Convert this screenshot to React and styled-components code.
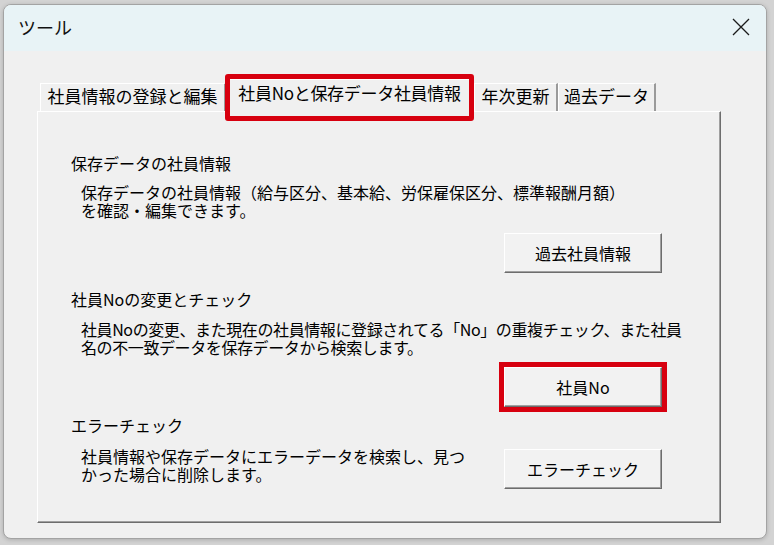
import React from "react";
import styled, { createGlobalStyle } from "styled-components";

const GlobalStyle = createGlobalStyle`
  html, body {
    margin: 0;
    padding: 0;
    background: #d3d3d3;
  }
  body {
    width: 774px;
    height: 545px;
    overflow: hidden;
    font-family: "Noto Sans CJK JP", "Noto Sans", sans-serif;
    color: #000;
  }
`;

const tabs = [
  { label: "社員情報の登録と編集", width: 186 },
  { label: "社員Noと保存データ社員情報", width: 244, active: true },
  { label: "年次更新", width: 84 },
  { label: "過去データ", width: 98 },
];

const App = () => {
  return (
    <>
      <GlobalStyle />
      <Page>
        <Window>
          <TitleBar>
            <Title>ツール</Title>
            <CloseButton>
              <svg width="20" height="20" viewBox="0 0 20 20">
                <path
                  d="M2 2 L18 18 M18 2 L2 18"
                  stroke="#1a1a1a"
                  strokeWidth="1.3"
                  fill="none"
                />
              </svg>
            </CloseButton>
          </TitleBar>
          <Body>
            <TabRow>
              {tabs.map((t) => (
                <Tab key={t.label} width={t.width} active={t.active}>
                  {t.label}
                </Tab>
              ))}
            </TabRow>
            <Panel>
              <Heading>保存データの社員情報</Heading>
              <Desc>
                <Line>保存データの社員情報（給与区分、基本給、労保雇保区分、標準報酬月額）</Line>
                <Line>を確認・編集できます。</Line>
              </Desc>
              <ButtonRow gap={14}>
                <Button>過去社員情報</Button>
              </ButtonRow>

              <Heading top={16}>社員Noの変更とチェック</Heading>
              <Desc top={11} tight>
                <Line>社員Noの変更、また現在の社員情報に登録されてる「No」の重複チェック、また社員</Line>
                <Line>名の不一致データを保存データから検索します。</Line>
              </Desc>
              <ButtonRow gap={11}>
                <Button marked>社員No</Button>
              </ButtonRow>

              <Heading top={8}>エラーチェック</Heading>
              <SplitRow>
                <Desc top={0}>
                  <Line>社員情報や保存データにエラーデータを検索し、見つ</Line>
                  <Line>かった場合に削除します。</Line>
                </Desc>
                <Button>エラーチェック</Button>
              </SplitRow>
            </Panel>
          </Body>
        </Window>
      </Page>
    </>
  );
};
export default App;

const Page = styled.div`
  padding: 4px 0 0 3px;
`;

const Window = styled.div`
  width: 764px;
  height: 535px;
  box-sizing: border-box;
  border: 1px solid #a3a3a3;
  border-radius: 8px;
  overflow: hidden;
  background: #f0f0f0;
  box-shadow: 0 1px 4px rgba(0, 0, 0, 0.18);
  display: flex;
  flex-direction: column;
`;

const TitleBar = styled.div`
  height: 46px;
  flex-shrink: 0;
  background: #e8f3f6;
  display: flex;
  align-items: center;
  justify-content: space-between;
  padding: 0 15px 0 14px;
`;

const Title = styled.div`
  font-size: 18px;
  line-height: 22px;
  color: #111;
  margin-top: -2px;
`;

const CloseButton = styled.div`
  width: 20px;
  height: 20px;
  display: flex;
  align-items: center;
  justify-content: center;
  margin-top: -2px;
`;

const Body = styled.div`
  padding: 28px 0 0 33px;
`;

const TabRow = styled.div`
  display: flex;
  align-items: flex-end;
  height: 34px;
  padding-left: 3px;
  position: relative;
  z-index: 1;
  margin-bottom: -2px;
`;

const Tab = styled.div`
  position: relative;
  box-sizing: border-box;
  width: ${({ width }) => width}px;
  height: ${({ active }) => (active ? 34 : 28)}px;
  margin: ${({ active }) => (active ? "0 2px" : "0 0 2px 0")};
  padding-top: ${({ active }) => (active ? 1 : 0)}px;
  text-align: center;
  font-size: 17px;
  line-height: 24px;
  white-space: nowrap;
  letter-spacing: ${({ active }) => (active ? "-0.3px" : "0")};
  background: #f0f0f0;
  border-left: 1px solid #ffffff;
  border-top: 1px solid #ffffff;
  border-right: 2px solid ${({ active }) => (active ? "#a0a0a0" : "#9a9a9a")};

  ${({ active }) =>
    active &&
    `
    &::after {
      content: "";
      position: absolute;
      left: -4px;
      right: -4px;
      top: -6px;
      bottom: -8px;
      border: 5px solid #d7000f;
      border-radius: 3px;
    }
  `}
`;

const Panel = styled.div`
  width: 684px;
  height: 412px;
  box-sizing: border-box;
  padding: 41px 58px 0 33px;
  border-left: 1px solid #ffffff;
  border-top: 1px solid #ffffff;
  border-right: 1px solid #6d6d6d;
  border-bottom: 1px solid #6d6d6d;
  box-shadow: inset -1px -1px 0 #a0a0a0;
  display: flex;
  flex-direction: column;
`;

const Heading = styled.div`
  font-size: 16px;
  line-height: 20px;
  margin-top: ${({ top }) => top || 0}px;
  white-space: nowrap;
`;

const Desc = styled.div`
  font-size: 16px;
  margin: ${({ top }) => (top === undefined ? 10 : top)}px 0 0 10px;
  white-space: nowrap;
  letter-spacing: ${({ tight }) => (tight ? "-0.4px" : "0")};
`;

const Line = styled.div`
  height: 18px;
  line-height: 18px;
`;

const ButtonRow = styled.div`
  display: flex;
  justify-content: flex-end;
  margin-top: ${({ gap }) => gap}px;
`;

const SplitRow = styled.div`
  display: flex;
  justify-content: space-between;
  align-items: flex-start;
  margin-top: 12px;

  & > button {
    margin-top: 2px;
  }
`;

const Button = styled.button`
  width: 158px;
  height: 40px;
  box-sizing: border-box;
  padding: 0;
  font-family: "Noto Sans CJK JP", "Noto Sans", sans-serif;
  font-size: 16px;
  color: #000;
  background: #f2f2f2;
  border: 1px solid;
  border-color: #ffffff #6d6d6d #6d6d6d #ffffff;
  box-shadow: inset -1px -1px 0 #a0a0a0;
  outline: ${({ marked }) => (marked ? "5px solid #d7000f" : "none")};
  outline-offset: 0;
  border-radius: 0;
`;
